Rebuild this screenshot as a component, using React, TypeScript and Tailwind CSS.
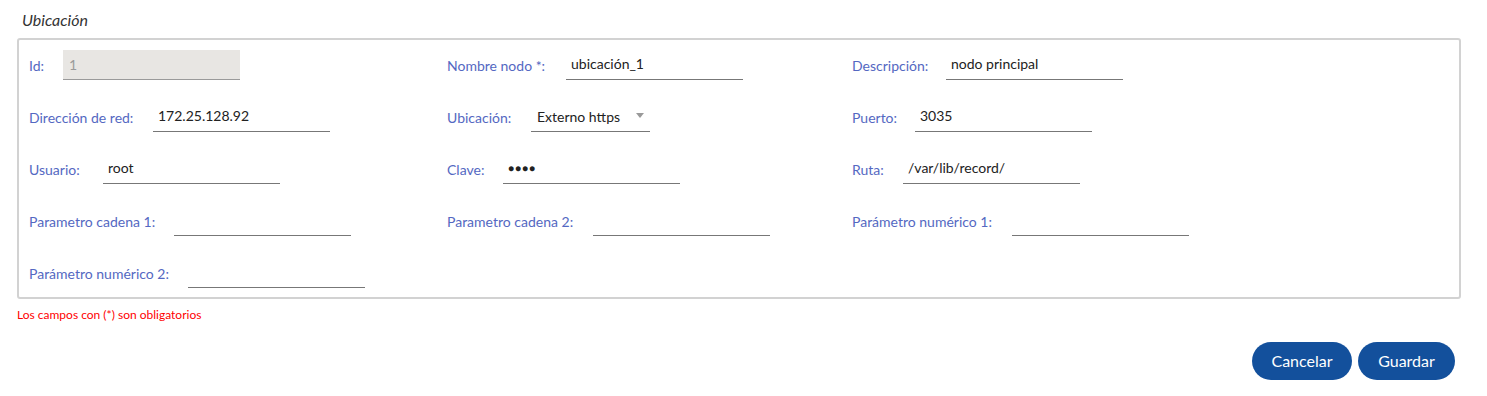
const font = { fontFamily: '"Segoe UI", Lato, "Noto Sans", sans-serif' };

type Field = {
  label: string;
  labelW: string;
  value?: string;
  kind?: "text" | "disabled" | "select" | "password";
};

const rows: Field[][] = [
  [
    { label: "Id:", labelW: "w-[34px]", value: "1", kind: "disabled" },
    { label: "Nombre nodo *:", labelW: "w-[119px]", value: "ubicación_1" },
    { label: "Descripción:", labelW: "w-[94px]", value: "nodo principal" },
  ],
  [
    { label: "Dirección de red:", labelW: "w-[124px]", value: "172.25.128.92" },
    { label: "Ubicación:", labelW: "w-[84px]", value: "Externo https", kind: "select" },
    { label: "Puerto:", labelW: "w-[63px]", value: "3035" },
  ],
  [
    { label: "Usuario:", labelW: "w-[74px]", value: "root" },
    { label: "Clave:", labelW: "w-[56px]", value: "●●●●", kind: "password" },
    { label: "Ruta:", labelW: "w-[51px]", value: "/var/lib/record/" },
  ],
  [
    { label: "Parametro cadena 1:", labelW: "w-[145px]" },
    { label: "Parametro cadena 2:", labelW: "w-[146px]" },
    { label: "Parámetro numérico 1:", labelW: "w-[160px]" },
  ],
  [{ label: "Parámetro numérico 2:", labelW: "w-[159px]" }],
];

function Input({ field }: { field: Field }) {
  if (field.kind === "disabled") {
    return (
      <div className="h-[30px] w-[177px] bg-[#e8e6e3] border-b border-[#9a9a9a] px-[6px] flex items-center text-[14px] text-[#9a9a9a]">
        {field.value}
      </div>
    );
  }
  if (field.kind === "select") {
    return (
      <div className="h-[30px] w-[119px] border-b border-[#777] pl-[6px] pr-[6px] flex items-center justify-between text-[14px] text-[#222]">
        <span>{field.value}</span>
        <span className="w-0 h-0 border-l-[4px] border-r-[4px] border-t-[5px] border-l-transparent border-r-transparent border-t-[#9a9a9a] mb-[3px]" />
      </div>
    );
  }
  if (field.kind === "password") {
    return (
      <div className="h-[30px] w-[177px] border-b border-[#777] px-[5px] flex items-center text-[10px] tracking-[1px] text-[#222]">
        {field.value}
      </div>
    );
  }
  return (
    <div className="h-[30px] w-[177px] border-b border-[#777] px-[5px] flex items-center text-[14px] text-[#222] pb-[2px]">
      {field.value}
    </div>
  );
}

export default function App() {
  return (
    <div className="bg-white w-[1487px] h-[396px] pl-[17px] pr-[26px] pt-[10px]" style={font}>
      <div className="pl-[5px] text-[16px] italic text-[#333] leading-[20px] mb-[8px]">Ubicación</div>

      <div className="border-2 border-[#d2d2d2] rounded-[3px] pl-[10px] pt-[10px] pb-[9px] flex flex-col gap-[22px]">
        {rows.map((row, i) => (
          <div key={i} className="grid grid-cols-[418px_405px_1fr]">
            {row.map((f) => (
              <div key={f.label} className="flex items-center">
                <span className={`${f.labelW} text-[14px] text-[#5468c2] shrink-0`}>{f.label}</span>
                <Input field={f} />
              </div>
            ))}
          </div>
        ))}
      </div>

      <div className="text-[12px] text-[#ff0000] mt-[9px] leading-[14px]">Los campos con (*) son obligatorios</div>

      <div className="flex justify-end gap-[6px] mt-[20px] pr-[6px]">
        <button className="w-[100px] h-[38px] rounded-full bg-[#13509c] text-white text-[16px]">Cancelar</button>
        <button className="w-[97px] h-[38px] rounded-full bg-[#13509c] text-white text-[16px]">Guardar</button>
      </div>
    </div>
  );
}
